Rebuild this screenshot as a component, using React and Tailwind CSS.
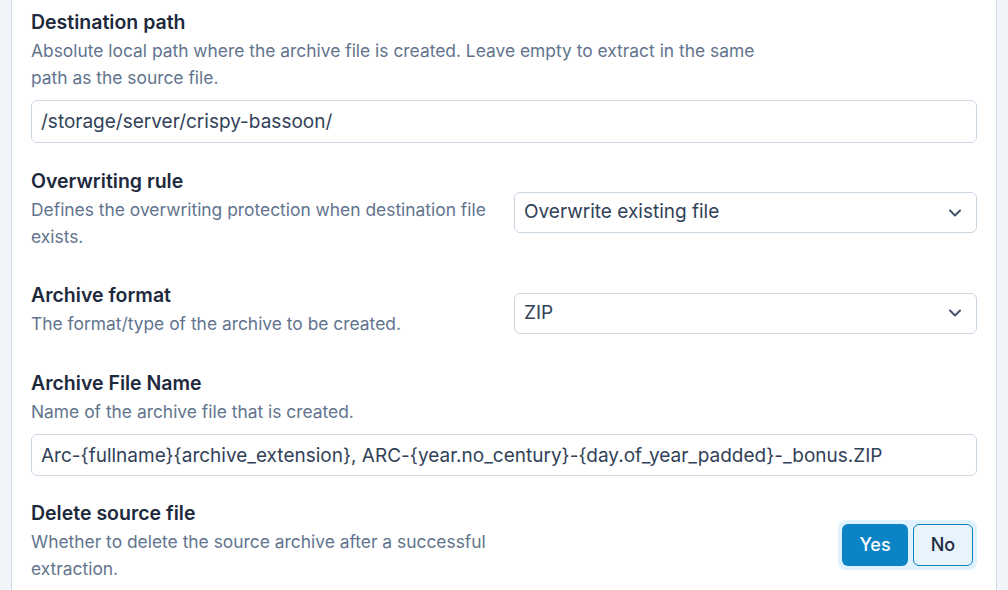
import React, { useState } from "react";
import { ChevronDown } from "lucide-react";

const fieldTitle = "text-[19.5px] leading-[29px] font-semibold text-slate-800";
const fieldDesc = "text-[17.4px] leading-[27px] text-slate-500";

const SelectBox = ({ value }) => (
  <div className="flex items-center justify-between h-[41px] px-[9px] bg-white border border-slate-300 rounded-md">
    <span className="text-[19px] text-slate-700">{value}</span>
    <ChevronDown size={20} strokeWidth={2.5} className="text-slate-600 mr-[2px]" />
  </div>
);

const App = () => {
  const [deleteSource, setDeleteSource] = useState(true);

  return (
    <div
      className="w-full min-h-[590px] bg-[#f1f4f8] px-[11px]"
      style={{ fontFamily: "Inter, 'Noto Sans', sans-serif" }}
    >
      <div className="min-h-[590px] bg-white border-x border-[#d3dbe7] px-[19px] pt-2">
        {/* Destination path */}
        <div>
          <p className={fieldTitle}>Destination path</p>
          <p className={`${fieldDesc} max-w-[760px]`}>
            Absolute local path where the archive file is created. Leave empty to extract in the same
            path as the source file.
          </p>
          <input
            readOnly
            value="/storage/server/crispy-bassoon/"
            className="mt-[9px] w-full h-[43px] px-[9px] text-[19px] text-slate-700 border border-slate-300 rounded-md outline-none"
          />
        </div>

        {/* Overwriting rule */}
        <div className="mt-6 grid grid-cols-2 gap-5 items-center">
          <div>
            <p className={fieldTitle}>Overwriting rule</p>
            <p className={fieldDesc}>
              Defines the overwriting protection when destination file exists.
            </p>
          </div>
          <div className="pt-2">
            <SelectBox value="Overwrite existing file" />
          </div>
        </div>

        {/* Archive format */}
        <div className="mt-[31px] grid grid-cols-2 gap-5 items-center">
          <div>
            <p className={fieldTitle}>Archive format</p>
            <p className={fieldDesc}>The format/type of the archive to be created.</p>
          </div>
          <div className="pt-2">
            <SelectBox value="ZIP" />
          </div>
        </div>

        {/* Archive File Name */}
        <div className="mt-8">
          <p className={fieldTitle}>Archive File Name</p>
          <p className={fieldDesc}>Name of the archive file that is created.</p>
          <input
            readOnly
            value="Arc-{fullname}{archive_extension}, ARC-{year.no_century}-{day.of_year_padded}-_bonus.ZIP"
            className="mt-[9px] w-full h-[42px] px-[9px] text-[19px] text-slate-700 border border-slate-300 rounded-md outline-none"
          />
        </div>

        {/* Delete source file */}
        <div className="mt-[23px] grid grid-cols-2 gap-5 items-center">
          <div>
            <p className={fieldTitle}>Delete source file</p>
            <p className={fieldDesc}>
              Whether to delete the source archive after a successful extraction.
            </p>
          </div>
          <div className="flex justify-end pt-2">
            <div className="flex gap-[5px] p-1 bg-[#e0f2fe] rounded-lg">
              <button
                onClick={() => setDeleteSource(true)}
                className={
                  deleteSource
                    ? "w-[66px] h-[42px] rounded-md bg-[#0b83c5] text-white text-[18px] font-medium"
                    : "w-[66px] h-[42px] rounded-md bg-[#e8f4fd] border border-[#0b83c5] text-slate-800 text-[18px] font-medium"
                }
              >
                Yes
              </button>
              <button
                onClick={() => setDeleteSource(false)}
                className={
                  !deleteSource
                    ? "w-[60px] h-[42px] rounded-md bg-[#0b83c5] text-white text-[18px] font-medium"
                    : "w-[60px] h-[42px] rounded-md bg-[#e8f4fd] border border-[#0b83c5] text-slate-800 text-[18px] font-medium"
                }
              >
                No
              </button>
            </div>
          </div>
        </div>
      </div>
    </div>
  );
};

export default App;
